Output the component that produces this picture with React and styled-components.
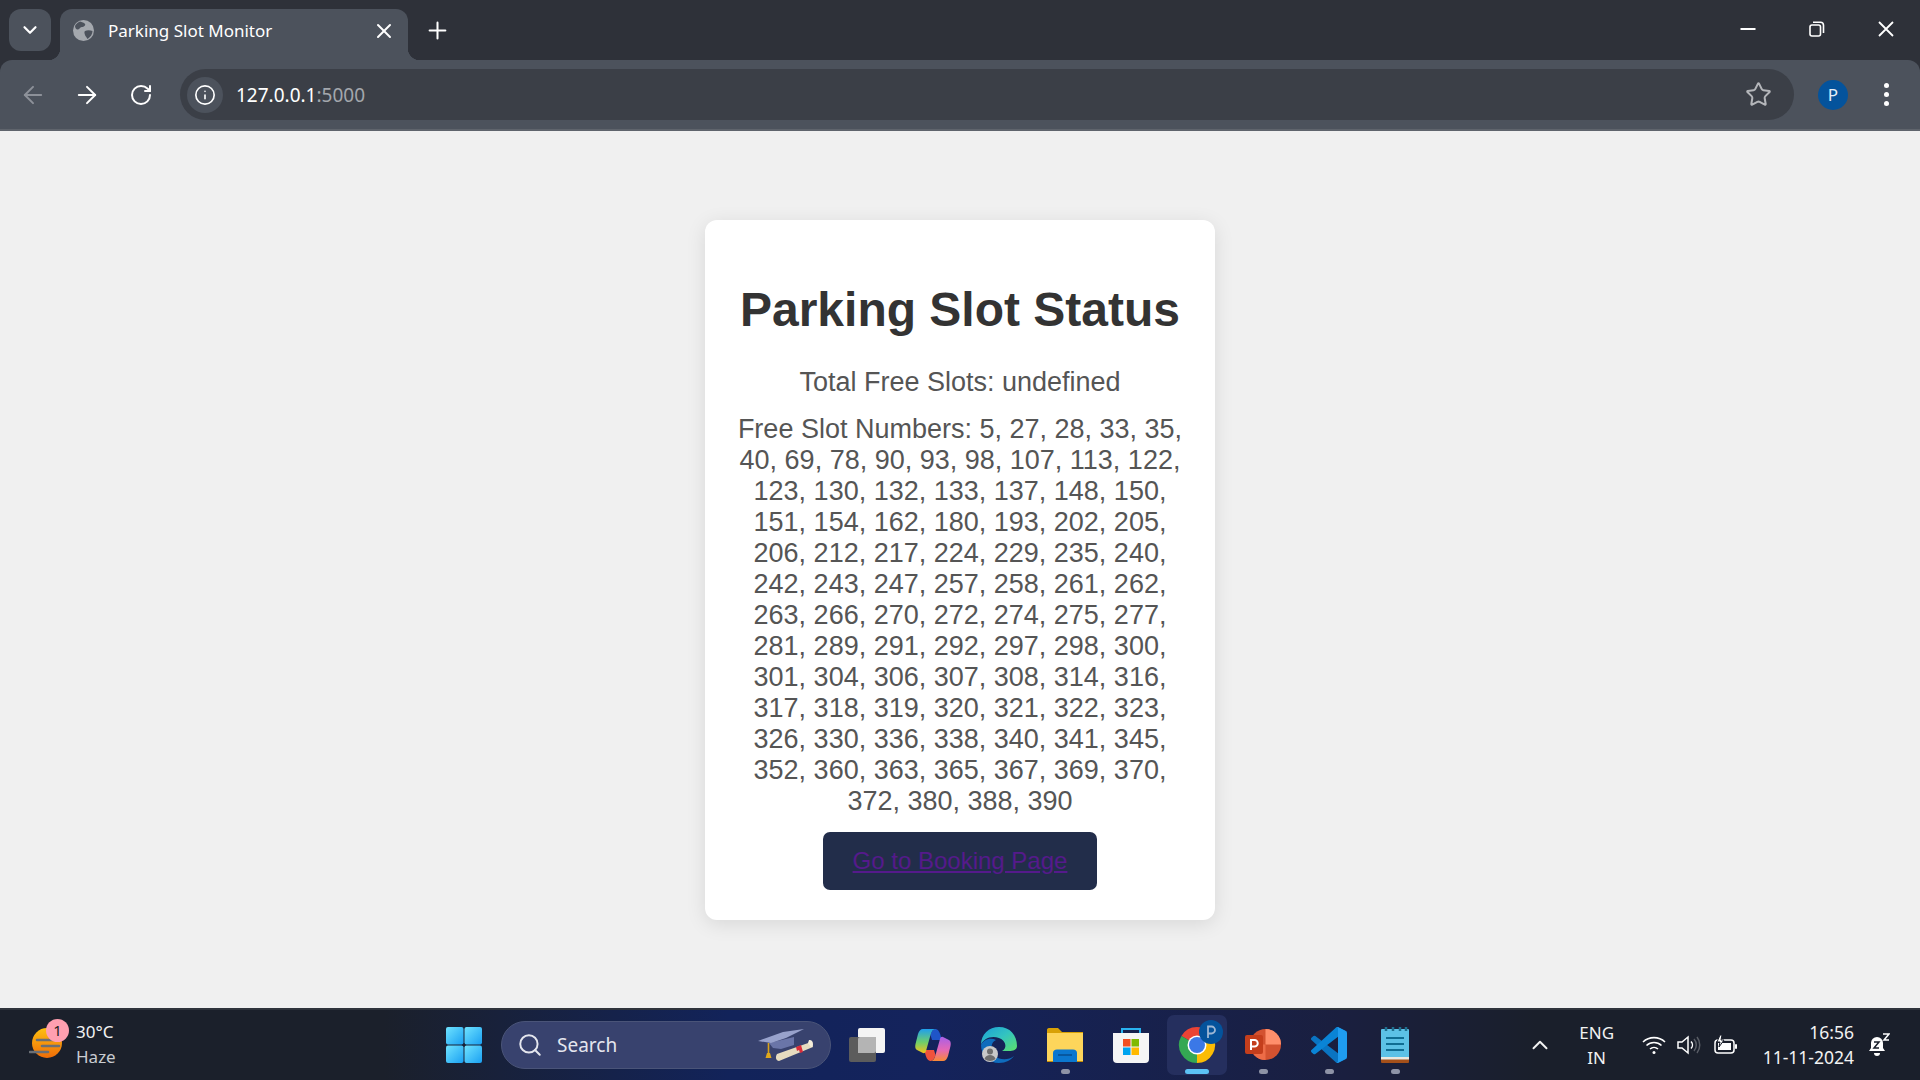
import React from "react";
import styled, { createGlobalStyle } from "styled-components";
import { ArrowLeft, ArrowRight, RotateCw, Info, Star, X, Plus, ChevronDown, ChevronUp, Search } from "lucide-react";

const GlobalStyle = createGlobalStyle`
  html, body { margin: 0; padding: 0; height: 100%; overflow: hidden; }
  body { font-family: "Liberation Sans", Arial, sans-serif; background: #f0f0f0; }
`;

const Screen = styled.div`
  display: flex;
  flex-direction: column;
  height: 100vh;
`;

const Browser = styled.header`
  display: flex;
  flex-direction: column;
  background: #2e3139;
  font-family: "Noto Sans", sans-serif;
  color: #fff;
`;

const TabStrip = styled.div`
  display: flex;
  height: 60px;
  align-items: flex-end;
  padding-left: 9px;
`;

const TabSearch = styled.div`
  width: 42px;
  height: 42px;
  align-self: flex-start;
  margin-top: 9px;
  border-radius: 12px;
  background: #4c525c;
  display: flex;
  align-items: center;
  justify-content: center;
`;

const Tab = styled.div`
  position: relative;
  margin-left: 9px;
  width: 348px;
  height: 51px;
  box-sizing: border-box;
  padding: 0 12px 8px 13px;
  background: #4c525c;
  border-radius: 12px 12px 0 0;
  display: flex;
  align-items: center;
  gap: 14px;
  font-size: 17px;

  &::before, &::after {
    content: "";
    position: absolute;
    bottom: 0;
    width: 12px;
    height: 12px;
  }
  &::before { left: -12px; background: radial-gradient(circle at 0 0, #2e3139 12px, #4c525c 12.5px); }
  &::after { right: -12px; background: radial-gradient(circle at 100% 0, #2e3139 12px, #4c525c 12.5px); }
`;

const TabTitle = styled.span`
  flex: 1;
  white-space: nowrap;
`;

const NewTab = styled.div`
  margin-left: 16px;
  height: 51px;
  padding-bottom: 8px;
  box-sizing: border-box;
  display: flex;
  align-items: center;
`;

const WindowControls = styled.div`
  margin-left: auto;
  align-self: flex-start;
  display: flex;
  height: 58px;
`;

const WindowButton = styled.div`
  width: 69px;
  display: flex;
  align-items: center;
  justify-content: center;
`;

const Toolbar = styled.div`
  height: 69px;
  background: #4c525c;
  border-radius: 12px 12px 0 0;
  border-bottom: 2px solid #5f646c;
  display: flex;
  align-items: center;
  padding-left: 6px;
`;

const NavGroup = styled.div`
  display: flex;
  width: 174px;
`;

const NavButton = styled.div`
  width: 54px;
  height: 40px;
  display: flex;
  align-items: center;
  justify-content: center;
  color: ${(p) => (p.$disabled ? "#8d9199" : "#fff")};
`;

const Omnibox = styled.div`
  width: 1614px;
  height: 51px;
  border-radius: 26px;
  background: #3b3f47;
  display: flex;
  align-items: center;
  padding: 0 22px 0 7px;
  box-sizing: border-box;
`;

const SiteInfo = styled.div`
  width: 36px;
  height: 36px;
  border-radius: 50%;
  background: #4c525c;
  display: flex;
  align-items: center;
  justify-content: center;
  margin-right: 13px;
`;

const Url = styled.span`
  flex: 1;
  font-size: 19px;
`;

const UrlPort = styled.span`
  color: #a3a7ad;
`;

const Avatar = styled.div`
  width: 30px;
  height: 30px;
  border-radius: 50%;
  background: #04539c;
  color: #e4eef8;
  font-size: 17px;
  display: flex;
  align-items: center;
  justify-content: center;
  margin-left: 24px;
`;

const MenuDots = styled.div`
  margin-left: 36px;
  display: flex;
  flex-direction: column;
  gap: 4px;
`;

const MenuDot = styled.span`
  width: 5px;
  height: 5px;
  border-radius: 50%;
  background: #fff;
`;

const Main = styled.main`
  flex: 1;
  display: flex;
  align-items: center;
  justify-content: center;
  background: #f0f0f0;
`;

const Card = styled.section`
  width: 510px;
  box-sizing: border-box;
  padding: 30px;
  background: #fff;
  border-radius: 12px;
  box-shadow: 0 4px 20px rgba(0, 0, 0, 0.1);
  text-align: center;
`;

const Title = styled.h1`
  margin: 32px 0 30px;
  font-size: 48px;
  line-height: 55px;
  font-weight: 700;
  color: #333;
`;

const Stat = styled.p`
  margin: 0 0 16px;
  font-size: 27px;
  line-height: 31px;
  color: #555;

  & + & {
    margin-bottom: 15px;
  }
`;

const BookingButton = styled.div`
  display: inline-block;
  padding: 15px 30px;
  border-radius: 7px;
  background: #222d4a;
  font-size: 24px;
  line-height: 28px;
`;

const BookingLink = styled.a`
  color: #551a8b;
  text-decoration: underline;
`;

const Taskbar = styled.footer`
  height: 70px;
  border-top: 2px solid #2f333c;
  background: linear-gradient(90deg, #1b202b 0%, #1b202b 20%, #12235a 38%, #14235c 48%, #1a1f3f 70%, #1a1f2b 80%, #1a1f2b 100%);
  display: flex;
  align-items: center;
  font-family: "Noto Sans", sans-serif;
  color: #fff;
`;

const Weather = styled.div`
  width: 446px;
  box-sizing: border-box;
  padding-left: 29px;
  display: flex;
  align-items: center;
  gap: 6px;
`;

const WeatherIcon = styled.div`
  position: relative;
  width: 41px;
  height: 44px;
  padding-top: 5px;
  box-sizing: border-box;
`;

const Badge = styled.span`
  position: absolute;
  left: 17px;
  top: -4px;
  width: 23px;
  height: 23px;
  border-radius: 50%;
  background: #ff9fb0;
  color: #222;
  font-size: 15px;
  line-height: 23px;
  text-align: center;
`;

const WeatherText = styled.div`
  font-size: 17px;
  line-height: 25px;
  margin-top: -3px;
  color: #f2f2f2;
`;

const WeatherSub = styled.div`
  color: #c9ccd1;
`;

const StartIcon = styled.div`
  width: 36px;
  margin-right: 19px;
  display: flex;
`;

const SearchBox = styled.div`
  width: 330px;
  height: 48px;
  box-sizing: border-box;
  border: 1px solid #4a5478;
  border-radius: 24px;
  background: #38426e;
  display: flex;
  align-items: center;
  padding: 0 16px 0 15px;
  gap: 14px;
  font-size: 19px;
  color: #e4e6ee;
`;

const SearchLabel = styled.span`
  flex: 1;
`;

const Slot = styled.div`
  position: relative;
  width: 60px;
  height: 60px;
  margin-left: 6px;
  border-radius: 7px;
  display: flex;
  align-items: center;
  justify-content: center;
  background: ${(p) => (p.$active ? "#252f5e" : "transparent")};

  &::after {
    content: "";
    display: ${(p) => (p.$running ? "block" : "none")};
    position: absolute;
    bottom: 1px;
    left: 50%;
    width: ${(p) => (p.$active ? "24px" : "9px")};
    height: 5px;
    margin-left: ${(p) => (p.$active ? "-12px" : "-4.5px")};
    border-radius: 3px;
    background: ${(p) => (p.$active ? "#5cc2f5" : "#8e93a6")};
  }
`;

const Tray = styled.div`
  margin-left: auto;
  display: flex;
  align-items: center;
  padding-right: 16px;
  color: #f2f2f2;
`;

const TrayIcon = styled.div`
  display: flex;
  width: 36px;
  justify-content: center;
`;

const Lang = styled.div`
  width: 60px;
  margin: 0 9px;
  text-align: center;
  font-size: 17px;
  line-height: 25px;
`;

const Clock = styled.div`
  margin-left: 19px;
  text-align: right;
  font-size: 17.5px;
  line-height: 25px;
`;

const Bell = styled.div`
  width: 50px;
  display: flex;
  justify-content: center;
`;

const SLOT_NUMBERS = [
  5, 27, 28, 33, 35, 40, 69, 78, 90, 93, 98, 107, 113, 122, 123, 130, 132, 133, 137, 148, 150,
  151, 154, 162, 180, 193, 202, 205, 206, 212, 217, 224, 229, 235, 240, 242, 243, 247, 257, 258,
  261, 262, 263, 266, 270, 272, 274, 275, 277, 281, 289, 291, 292, 297, 298, 300, 301, 304, 306,
  307, 308, 314, 316, 317, 318, 319, 320, 321, 322, 323, 326, 330, 336, 338, 340, 341, 345, 352,
  360, 363, 365, 367, 369, 370, 372, 380, 388, 390,
];

const GlobeIcon = () => (
  <svg width="21" height="21" viewBox="0 0 21 21">
    <circle cx="10.5" cy="10.5" r="10.5" fill="#a4a8ae" />
    <path d="M7 1.5c2 .5 4 1 5 2.5s-1.5 3-3 3-2.5 2-4 2.5S2 8 2 6c1-2 3-4 5-4.5zM12 11c2-1 5-1 7.5 0 0 3-2 6-5 8-1-2-2-2.5-2.5-4S11 11.5 12 11z" fill="#4c525c" />
  </svg>
);

const MinimizeIcon = () => (
  <svg width="16" height="16" viewBox="0 0 16 16">
    <rect x="0.5" y="7" width="15" height="2" fill="#fff" />
  </svg>
);

const RestoreIcon = () => (
  <svg width="16" height="16" viewBox="0 0 16 16" fill="none" stroke="#fff" strokeWidth="1.6">
    <rect x="1" y="4" width="10.5" height="11" rx="2" />
    <path d="M4 1.2h7.5a3 3 0 0 1 3 3V12" />
  </svg>
);

const CloseIcon = () => (
  <svg width="16" height="16" viewBox="0 0 16 16" fill="none" stroke="#fff" strokeWidth="1.8">
    <path d="M1 1l14 14M15 1L1 15" />
  </svg>
);

const HazeIcon = () => (
  <svg width="34" height="30" viewBox="0 0 34 30" style={{ display: "block" }}>
    <defs>
      <linearGradient id="sun" x1="0" y1="0" x2="0" y2="1">
        <stop offset="0" stopColor="#fdc010" />
        <stop offset="1" stopColor="#ef6c08" />
      </linearGradient>
    </defs>
    <circle cx="18" cy="15" r="15" fill="url(#sun)" />
    <path d="M8 12h21M13 18h17M1 24h18" stroke="#6b6f75" strokeWidth="2.6" strokeLinecap="round" />
  </svg>
);

const WindowsLogo = () => (
  <svg width="36" height="36" viewBox="0 0 36 36">
    <defs>
      <linearGradient id="winA" x1="0" y1="0" x2="1" y2="1">
        <stop offset="0" stopColor="#6fe3ff" />
        <stop offset="1" stopColor="#1aa0f2" />
      </linearGradient>
    </defs>
    <rect width="17.5" height="17.5" rx="2" fill="url(#winA)" />
    <rect x="18.5" width="17.5" height="17.5" rx="2" fill="url(#winA)" />
    <rect y="18.5" width="17.5" height="17.5" rx="2" fill="url(#winA)" />
    <rect x="18.5" y="18.5" width="17.5" height="17.5" rx="2" fill="url(#winA)" />
  </svg>
);

const CapIcon = () => (
  <svg width="56" height="36" viewBox="0 0 56 36">
    <path d="M19 27L53 15l2 5-34 14c-3 0-4-4-2-7z" fill="#e6dcc0" />
    <path d="M51 13c2-.5 4 1 4 4s-1 3-2 3l-3-4z" fill="#f5eeda" />
    <path d="M38 20l5-2 2 7-3 1-1-3-2 1z" fill="#d92d3a" />
    <path d="M11 16l25-6v8l-13 4-8-1z" fill="#6a75a8" />
    <path d="M0 14L25 5l21-3-18 9-15 5z" fill="#98a2cc" />
    <path d="M10.5 16v12" stroke="#d9a21a" strokeWidth="1.6" />
    <path d="M9 26h3l1.5 5h-6z" fill="#e0a81c" />
  </svg>
);

const TaskViewIcon = () => (
  <svg width="36" height="34" viewBox="0 0 36 34">
    <rect x="9" y="0" width="27" height="25" rx="2" fill="#f4f4f4" />
    <rect x="0" y="9" width="27" height="25" rx="2" fill="#5c5c5c" />
    <path d="M9 11a2 2 0 0 1 2-2h16v14a2 2 0 0 1-2 2H9z" fill="#b4b4b4" />
  </svg>
);

const CopilotIcon = () => (
  <svg width="36" height="34" viewBox="0 0 36 34">
    <defs>
      <linearGradient id="copA" x1="0" y1="0" x2="0" y2="1">
        <stop offset="0" stopColor="#1f9fee" />
        <stop offset=".55" stopColor="#6fcf6a" />
        <stop offset="1" stopColor="#f5c21b" />
      </linearGradient>
      <linearGradient id="copB" x1="0" y1="0" x2="0" y2="1">
        <stop offset="0" stopColor="#f98a35" />
        <stop offset=".45" stopColor="#e668b4" />
        <stop offset="1" stopColor="#a85fe8" />
      </linearGradient>
    </defs>
    <path d="M21 1c3 1 4 4 5 8l1 3H17l-1.5-5c1-3.5 2.5-6 5.5-6z" fill="#1f55c8" />
    <path d="M15 33c-3-1-4-4-5-8l-1-3h10l1.5 5c-1 3.5-2.5 6-5.500 6z" fill="#f0523c" />
    <path d="M8 1h13c-3 0-4.5 2-5.5 6L11 23c-.5 2-2 3-4 1.5L2 22c-2-1-2-4-1.5-6L3 6c1-3 2.5-5 5-5z" fill="url(#copA)" />
    <path d="M8 1h13c-3 0-4.5 2-5.5 6L11 23c-.5 2-2 3-4 1.5L2 22c-2-1-2-4-1.5-6L3 6c1-3 2.5-5 5-5z" fill="url(#copB)" transform="rotate(180 18 17)" />
  </svg>
);

const EdgeIcon = () => (
  <svg width="36" height="36" viewBox="0 0 36 36">
    <defs>
      <linearGradient id="edgeA" x1="0" y1="0" x2="1" y2="1">
        <stop offset="0" stopColor="#1a9fd8" />
        <stop offset=".5" stopColor="#33c4c0" />
        <stop offset="1" stopColor="#5de06a" />
      </linearGradient>
    </defs>
    <path d="M0 18C0 7 8 0 18 0c11 0 18 8 18 19 0 4-4 5-8 5h-7c5-2 5-10-3-13C10 8 2 12 0 18z" fill="url(#edgeA)" />
    <path d="M0 18c2-5 9-8 15-5-5 2-6 9-2 15 4 5 14 6 20 1-3 4-8 7-15 7C8 36 0 28 0 18z" fill="#0f6cbd" />
    <circle cx="9" cy="27" r="8" fill="#c9c9c9" />
    <circle cx="9" cy="24.5" r="3" fill="#6e6e6e" />
    <path d="M3.5 32c1-3 3-4 5.5-4s4.5 1 5.5 4c-3 2.5-8 2.5-11 0z" fill="#6e6e6e" />
  </svg>
);

const FolderIcon = () => (
  <svg width="36" height="34" viewBox="0 0 36 34">
    <path d="M0 2c0-1 .5-2 2-2h9l4 4h21v8H0z" fill="#d8a106" />
    <path d="M0 5h36v29H0z" fill="#fdd55b" />
    <path d="M6 34V25c0-2 1.5-3.5 4-3.5h16c2.5 0 4 1.5 4 3.5v9z" fill="#0b77cf" />
    <path d="M11 27h14" stroke="#074e91" strokeWidth="1.5" />
    <path d="M0 33h6v1H0zM30 33h6v1h-6z" fill="#c58c05" />
  </svg>
);

const StoreIcon = () => (
  <svg width="36" height="36" viewBox="0 0 36 36">
    <path d="M9 7V2h18v5" fill="none" stroke="#29b2f0" strokeWidth="2" />
    <path d="M0 6h36v26a4 4 0 0 1-4 4H4a4 4 0 0 1-4-4z" fill="#f5f5f5" />
    <rect x="10" y="12" width="7.5" height="7.5" fill="#f25022" />
    <rect x="18.5" y="12" width="7.5" height="7.5" fill="#7fba00" />
    <rect x="10" y="20.5" width="7.5" height="7.5" fill="#00a4ef" />
    <rect x="18.5" y="20.5" width="7.5" height="7.5" fill="#ffb900" />
  </svg>
);

const ChromeIcon = () => (
  <svg width="60" height="60" viewBox="0 0 60 60">
    <g transform="translate(12 12)">
      <path d="M18 18L2.4 9A18 18 0 0 1 33.6 9Z" fill="#ea4335" />
      <path d="M18 18L18 36A18 18 0 0 1 2.4 9Z" fill="#34a853" />
      <path d="M18 18L33.6 9A18 18 0 0 1 18 36Z" fill="#fbbc04" />
      <circle cx="18" cy="18" r="9.5" fill="#fff" />
      <circle cx="18" cy="18" r="8" fill="#3b78e7" />
    </g>
    <circle cx="44" cy="17" r="12" fill="#04539c" />
    <path d="M41 23V11.5h3.5a3.5 3.5 0 0 1 0 7H41" fill="none" stroke="#9db7d4" strokeWidth="1.8" />
  </svg>
);

const PowerPointIcon = () => (
  <svg width="36" height="36" viewBox="0 0 36 36">
    <circle cx="20.5" cy="17.5" r="15.5" fill="#d35230" />
    <path d="M20.5 2a15.5 15.5 0 0 1 15.5 15.5H20.5z" fill="#ff8f6b" />
    <path d="M5 17.5h15.5V33A15.5 15.5 0 0 1 5 17.5z" fill="#ed6c47" />
    <rect x="0" y="8" width="18" height="19" rx="2" fill="#c43e1c" />
    <path d="M6 23V13h3.5a3 3 0 0 1 0 6.5H6" fill="none" stroke="#fff" strokeWidth="2" />
  </svg>
);

const VSCodeIcon = () => (
  <svg width="36" height="36" viewBox="0 0 100 100">
    <path d="M96.46 89.2 75.86 99.1a6.23 6.23 0 0 1-7.1-1.2L1.3 36.4a4.16 4.16 0 0 1 0-6.2l5.5-5a4.17 4.17 0 0 1 5.3-.2L93.3 86.6a4.14 4.14 0 0 0 6.7-3.3v.3a6.24 6.24 0 0 1-3.54 5.6z" fill="#0a74c2" />
    <path d="M96.46 10.8 75.86.9a6.23 6.23 0 0 0-7.1 1.2L1.3 63.6a4.16 4.16 0 0 0 0 6.2l5.5 5a4.17 4.17 0 0 0 5.3.2L93.3 13.4a4.14 4.14 0 0 1 6.7 3.3v-.3a6.24 6.24 0 0 0-3.54-5.6z" fill="#0a84d6" />
    <path d="M75.86 99.1a6.23 6.23 0 0 1-7.1-1.2c2.3 2.3 6.24.67 6.24-2.6V4.7c0-3.27-3.94-4.9-6.24-2.6a6.23 6.23 0 0 1 7.1-1.2l20.6 9.9A6.24 6.24 0 0 1 100 16.4v67.2a6.24 6.24 0 0 1-3.54 5.6z" fill="#1f9cf0" />
  </svg>
);

const NotepadIcon = () => (
  <svg width="28" height="36" viewBox="0 0 28 36">
    <rect x="0" y="2" width="28" height="30" rx="1" fill="#5cc1e6" />
    <path d="M0 32h28v3a1 1 0 0 1-1 1H1a1 1 0 0 1-1-1z" fill="#a4501a" />
    <rect x="0" y="30" width="28" height="2.5" fill="#e8e8e0" />
    <path d="M5 0v4M12 0v4M19 0v4M25 0v4" stroke="#1f6f8f" strokeWidth="2.5" />
    <path d="M5 11h18M5 17h18M5 23h18" stroke="#0f6d93" strokeWidth="2" />
  </svg>
);

const WifiIcon = () => (
  <svg width="24" height="20" viewBox="0 0 24 20" fill="none" stroke="#fff" strokeWidth="1.6">
    <path d="M1 7a16 16 0 0 1 22 0M4.5 10.5a11 11 0 0 1 15 0M8 14a6 6 0 0 1 8 0" />
    <circle cx="12" cy="17.5" r="1.5" fill="#fff" stroke="none" />
  </svg>
);

const SpeakerIcon = () => (
  <svg width="26" height="20" viewBox="0 0 26 20" fill="none" strokeWidth="1.5">
    <path d="M1 7h4l6-5v16l-6-5H1z" stroke="#fff" />
    <path d="M14 6.5a5 5 0 0 1 0 7" stroke="#fff" />
    <path d="M17 4a9 9 0 0 1 0 12M20 2a13 13 0 0 1 0 16" stroke="#5a5e66" />
  </svg>
);

const BatteryIcon = () => (
  <svg width="24" height="20" viewBox="0 0 24 20" fill="none">
    <rect x="1" y="5" width="19" height="13" rx="3" stroke="#fff" strokeWidth="1.5" />
    <rect x="4" y="8" width="13" height="7" fill="#fff" />
    <rect x="21" y="9" width="2" height="5" rx="1" fill="#fff" />
    <path d="M6 0L3 7h3l-1 5 5-7H7l1-5z" fill="#fff" stroke="#1a1f2b" strokeWidth="1" />
  </svg>
);

const BellIcon = () => (
  <svg width="22" height="24" viewBox="0 0 22 24">
    <path d="M9 4a6 6 0 0 0-6 6v5l-2 3h16l-2-3v-5a6 6 0 0 0-6-6z" fill="#fff" />
    <path d="M6 20h6a3 3 0 0 1-6 0z" fill="#fff" />
    <path d="M6 9h5l-5 6h5" fill="none" stroke="#1a1f2b" strokeWidth="1.5" />
    <path d="M15 1h6l-5 6h5" fill="none" stroke="#fff" strokeWidth="1.5" />
  </svg>
);

const App = () => {
  return (
    <Screen>
      <GlobalStyle />
      <Browser>
        <TabStrip>
          <TabSearch>
            <ChevronDown size={22} strokeWidth={2.4} />
          </TabSearch>
          <Tab>
            <GlobeIcon />
            <TabTitle>Parking Slot Monitor</TabTitle>
            <X size={24} strokeWidth={2} />
          </Tab>
          <NewTab>
            <Plus size={27} strokeWidth={1.8} />
          </NewTab>
          <WindowControls>
            <WindowButton><MinimizeIcon /></WindowButton>
            <WindowButton><RestoreIcon /></WindowButton>
            <WindowButton><CloseIcon /></WindowButton>
          </WindowControls>
        </TabStrip>
        <Toolbar>
          <NavGroup>
            <NavButton $disabled><ArrowLeft size={28} strokeWidth={1.7} /></NavButton>
            <NavButton><ArrowRight size={28} strokeWidth={1.7} /></NavButton>
            <NavButton><RotateCw size={24} strokeWidth={2} /></NavButton>
          </NavGroup>
          <Omnibox>
            <SiteInfo><Info size={22} strokeWidth={1.8} /></SiteInfo>
            <Url>127.0.0.1<UrlPort>:5000</UrlPort></Url>
            <Star size={27} strokeWidth={1.8} color="#b4b6ba" />
          </Omnibox>
          <Avatar>P</Avatar>
          <MenuDots><MenuDot /><MenuDot /><MenuDot /></MenuDots>
        </Toolbar>
      </Browser>
      <Main>
        <Card>
          <Title>Parking Slot Status</Title>
          <Stat>Total Free Slots: undefined</Stat>
          <Stat>Free Slot Numbers: {SLOT_NUMBERS.join(", ")}</Stat>
          <BookingButton>
            <BookingLink href="#booking">Go to Booking Page</BookingLink>
          </BookingButton>
        </Card>
      </Main>
      <Taskbar>
        <Weather>
          <WeatherIcon>
            <HazeIcon />
            <Badge>1</Badge>
          </WeatherIcon>
          <WeatherText>30°C<WeatherSub>Haze</WeatherSub></WeatherText>
        </Weather>
        <StartIcon><WindowsLogo /></StartIcon>
        <SearchBox>
          <Search size={26} strokeWidth={1.8} />
          <SearchLabel>Search</SearchLabel>
          <CapIcon />
        </SearchBox>
        <Slot><TaskViewIcon /></Slot>
        <Slot><CopilotIcon /></Slot>
        <Slot><EdgeIcon /></Slot>
        <Slot $running><FolderIcon /></Slot>
        <Slot><StoreIcon /></Slot>
        <Slot $active $running><ChromeIcon /></Slot>
        <Slot $running><PowerPointIcon /></Slot>
        <Slot $running><VSCodeIcon /></Slot>
        <Slot $running><NotepadIcon /></Slot>
        <Tray>
          <TrayIcon><ChevronUp size={26} strokeWidth={1.8} /></TrayIcon>
          <Lang>ENG<br />IN</Lang>
          <TrayIcon><WifiIcon /></TrayIcon>
          <TrayIcon><SpeakerIcon /></TrayIcon>
          <TrayIcon><BatteryIcon /></TrayIcon>
          <Clock>16:56<br />11-11-2024</Clock>
          <Bell><BellIcon /></Bell>
        </Tray>
      </Taskbar>
    </Screen>
  );
};

export default App;
